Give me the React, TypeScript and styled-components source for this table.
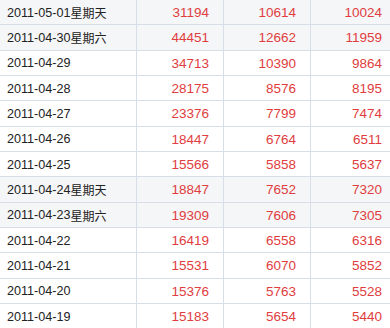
import styled, { createGlobalStyle } from 'styled-components';

const GlobalStyle = createGlobalStyle`
    html, body {
        margin: 0;
        padding: 0;
        background: #fff;
        overflow: hidden;
    }
`;

type Day = {
    date: string;
    week?: string;
    a: number;
    b: number;
    c: number;
};

const days: Day[] = [
    { date: '2011-05-01', week: '星期天', a: 31194, b: 10614, c: 10024 },
    { date: '2011-04-30', week: '星期六', a: 44451, b: 12662, c: 11959 },
    { date: '2011-04-29', a: 34713, b: 10390, c: 9864 },
    { date: '2011-04-28', a: 28175, b: 8576, c: 8195 },
    { date: '2011-04-27', a: 23376, b: 7799, c: 7474 },
    { date: '2011-04-26', a: 18447, b: 6764, c: 6511 },
    { date: '2011-04-25', a: 15566, b: 5858, c: 5637 },
    { date: '2011-04-24', week: '星期天', a: 18847, b: 7652, c: 7320 },
    { date: '2011-04-23', week: '星期六', a: 19309, b: 7606, c: 7305 },
    { date: '2011-04-22', a: 16419, b: 6558, c: 6316 },
    { date: '2011-04-21', a: 15531, b: 6070, c: 5852 },
    { date: '2011-04-20', a: 15376, b: 5763, c: 5528 },
    { date: '2011-04-19', a: 15183, b: 5654, c: 5440 },
];

const Table = styled.div`
    width: 397px;
    display: flex;
    flex-direction: column;
`;

const Row = styled.div<{ $weekend: boolean }>`
    display: flex;
    height: 25.33px;
    box-sizing: border-box;
    border-bottom: 1px solid #d7dee8;
    background: ${p => (p.$weekend ? '#f5f6f8' : '#fff')};
`;

const DateCell = styled.div`
    width: 137px;
    box-sizing: border-box;
    border-right: 1px solid #d7dee8;
    padding-left: 7px;
    padding-top: 1px;
    display: flex;
    align-items: center;
    font-family: "Liberation Sans", "Noto Sans CJK SC", sans-serif;
    font-size: 12.6px;
    color: #222;
    white-space: nowrap;
`;

const Week = styled.span`
    font-size: 12px;
`;

const NumCell = styled.div<{ $w: number }>`
    width: ${p => p.$w}px;
    box-sizing: border-box;
    border-right: 1px solid #d7dee8;
    padding-right: 14px;
    padding-top: 1px;
    display: flex;
    align-items: center;
    justify-content: flex-end;
    font-family: "Liberation Sans", Arial, sans-serif;
    font-size: 13.5px;
    color: #df3d40;
`;

export default function App() {
    return (
        <>
            <GlobalStyle />
            <Table>
                {days.map(d => (
                    <Row key={d.date} $weekend={!!d.week}>
                        <DateCell>
                            {d.date}
                            {d.week && <Week>{d.week}</Week>}
                        </DateCell>
                        <NumCell $w={87}>{d.a}</NumCell>
                        <NumCell $w={87}>{d.b}</NumCell>
                        <NumCell $w={86}>{d.c}</NumCell>
                    </Row>
                ))}
            </Table>
        </>
    );
}
